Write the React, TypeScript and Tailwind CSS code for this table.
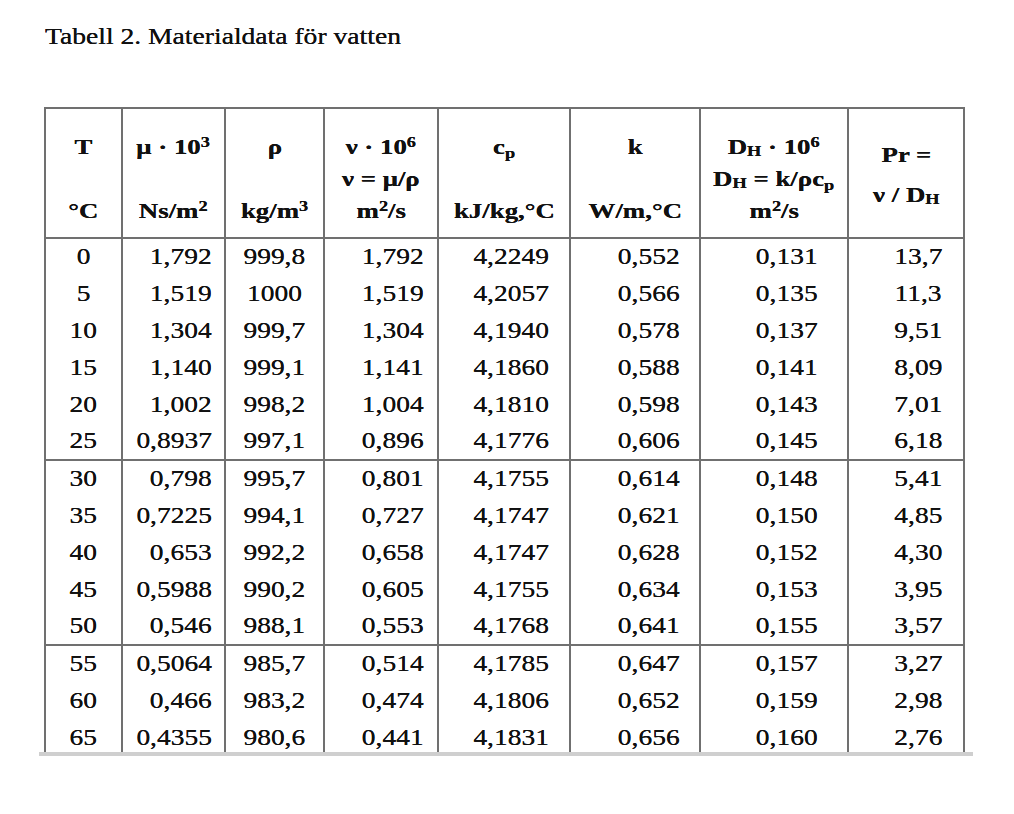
const COLS = "grid grid-cols-[79px_103px_99px_114px_132px_130px_148px_116px]";

// text in the picture is stretched sideways, so each cell's text gets a scale-x
const ROWS: string[][] = [
  ["0", "1,792", "999,8", "1,792", "4,2249", "0,552", "0,131", "13,7"],
  ["5", "1,519", "1000", "1,519", "4,2057", "0,566", "0,135", "11,3"],
  ["10", "1,304", "999,7", "1,304", "4,1940", "0,578", "0,137", "9,51"],
  ["15", "1,140", "999,1", "1,141", "4,1860", "0,588", "0,141", "8,09"],
  ["20", "1,002", "998,2", "1,004", "4,1810", "0,598", "0,143", "7,01"],
  ["25", "0,8937", "997,1", "0,896", "4,1776", "0,606", "0,145", "6,18"],
  ["30", "0,798", "995,7", "0,801", "4,1755", "0,614", "0,148", "5,41"],
  ["35", "0,7225", "994,1", "0,727", "4,1747", "0,621", "0,150", "4,85"],
  ["40", "0,653", "992,2", "0,658", "4,1747", "0,628", "0,152", "4,30"],
  ["45", "0,5988", "990,2", "0,605", "4,1755", "0,634", "0,153", "3,95"],
  ["50", "0,546", "988,1", "0,553", "4,1768", "0,641", "0,155", "3,57"],
  ["55", "0,5064", "985,7", "0,514", "4,1785", "0,647", "0,157", "3,27"],
  ["60", "0,466", "983,2", "0,474", "4,1806", "0,652", "0,159", "2,98"],
  ["65", "0,4355", "980,6", "0,441", "4,1831", "0,656", "0,160", "2,76"],
];

const CELL_ALIGN = [
  "justify-center",
  "justify-end pr-[12px]",
  "justify-center",
  "justify-end pr-[13px]",
  "justify-end pr-[20px]",
  "justify-end pr-[19px]",
  "justify-end pr-[29px]",
  "justify-end pr-[21px]",
];

const GROUP_END = [5, 10];

const Stretch = ({ children, right }: { children: React.ReactNode; right?: boolean }) => (
  <span className={`inline-block scale-x-[1.22] whitespace-nowrap ${right ? "origin-right" : "origin-center"}`}>
    {children}
  </span>
);

const DH = () => (
  <>
    D<sub className="text-[15px] -bottom-[2px]">H</sub>
  </>
);

const HEADERS: React.ReactNode[][] = [
  [<>T</>, null, <>°C</>],
  [<>μ · 10<sup className="text-[15px]">3</sup></>, null, <>Ns/m<sup className="text-[15px]">2</sup></>],
  [<>ρ</>, null, <>kg/m<sup className="text-[15px]">3</sup></>],
  [
    <>ν · 10<sup className="text-[15px]">6</sup></>,
    <>ν = μ/ρ</>,
    <>m<sup className="text-[15px]">2</sup>/s</>,
  ],
  [<>c<sub className="text-[15px]">p</sub></>, null, <>kJ/kg,°C</>],
  [<>k</>, null, <>W/m,°C</>],
  [
    <><DH /> · 10<sup className="text-[15px]">6</sup></>,
    <><DH /> = k/ρc<sub className="text-[15px]">p</sub></>,
    <>m<sup className="text-[15px]">2</sup>/s</>,
  ],
];

export default function App() {
  return (
    <div className="min-h-[814px] bg-white text-[#111] [text-shadow:0_0_0.5px_#000] font-['Liberation_Serif','Times_New_Roman',serif]">
      <div className="pl-[45px] pt-[23px] h-[51px] text-[23px] leading-[28px]">
        <span className="inline-block scale-x-[1.2] origin-left whitespace-nowrap">
          Tabell 2. Materialdata för vatten
        </span>
      </div>

      <div className="ml-[44px] mt-[56px] h-[645px] w-[921px] overflow-hidden">
        <div className="border-t-2 border-[#707070]">
          <div className={`${COLS} h-[130px] border-b-2 border-[#707070] font-bold text-[22px]`}>
            {HEADERS.map((lines, i) => (
              <div
                key={i}
                className={`flex flex-col items-center pt-[22px] leading-[32px] border-r-2 border-[#707070] ${i === 0 ? "border-l-2" : ""}`}
              >
                {lines.map((l, j) => (
                  <div key={j} className="h-[32px]">
                    {l && <Stretch>{l}</Stretch>}
                  </div>
                ))}
              </div>
            ))}
            <div className="flex flex-col items-center pt-[26px] leading-[40px] border-r-2 border-[#707070]">
              <div className="h-[40px]">
                <Stretch>Pr =</Stretch>
              </div>
              <div className="h-[40px]">
                <Stretch>
                  ν / <DH />
                </Stretch>
              </div>
            </div>
          </div>

          {ROWS.map((row, r) => (
            <div
              key={r}
              className={`${COLS} h-[37px] text-[22.5px] ${GROUP_END.includes(r) ? "border-b-2 border-[#707070]" : ""}`}
            >
              {row.map((v, c) => (
                <div
                  key={c}
                  className={`flex items-center pb-[2px] border-r-2 border-[#707070] ${c === 0 ? "border-l-2" : ""} ${CELL_ALIGN[c]}`}
                >
                  <Stretch right={c !== 0 && c !== 2}>{v}</Stretch>
                </div>
              ))}
            </div>
          ))}
        </div>
      </div>
      <div className="ml-[39px] h-[4px] w-[934px] bg-[#cfcfcf]" />
    </div>
  );
}
